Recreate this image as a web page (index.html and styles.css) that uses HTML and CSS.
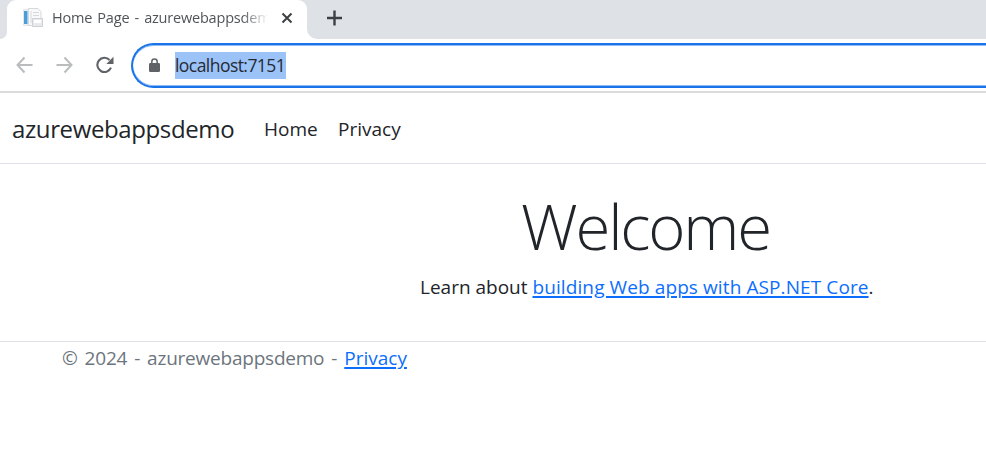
FILE: index.html
```html
<!DOCTYPE html>
<html lang="en">
<head>
<meta charset="utf-8">
<title>Home Page - azurewebappsdemo</title>
<link rel="stylesheet" href="styles.css">
</head>
<body>
<div class="tabstrip">
  <div class="edge"></div>
  <div class="tab">
    <svg class="favicon" width="20" height="20" viewBox="0 0 20 20">
      <path d="M.5 1.500h5v16h-5z" fill="#eef1f3" stroke="#e4e7ea"/>
      <path d="M1 3h3.500v13H1z" fill="#4a9fd8"/>
      <path d="M5.500.5H15l3 3v14H5.500z" fill="#f8f9fa" stroke="#d5d9dc"/>
      <path d="M8 3v12M10 4.500h6M10 7.500h6" stroke="#d5dade" fill="none"/>
      <path d="M9.500 10.500h10v8h-10z" fill="#e8ebed" stroke="#cdd1d5"/>
      <path d="M11 12h7v3h-7z" fill="#fff"/>
    </svg>
    <span class="tab-title">Home Page - azurewebappsdemo</span>
    <svg class="close" width="12" height="12" viewBox="0 0 12 12"><path d="M1.500 1.500l9 9M10.500 1.500l-9 9" stroke="#3c4043" stroke-width="2"/></svg>
  </div>
  <div class="rest"><svg width="16" height="16" viewBox="0 0 16 16"><path d="M7.500 .5v15M0 8h15" stroke="#3c4043" stroke-width="2.400"/></svg></div>
</div>
<div class="toolbar">
  <svg class="nav-icon" width="18" height="18" viewBox="0 0 18 18"><path d="M16.500 9H2M8.500 1.500L1.500 9l7 7.500" fill="none" stroke="#babcbe" stroke-width="2"/></svg>
  <svg class="nav-icon" width="18" height="18" viewBox="0 0 18 18"><path d="M.5 9h15M8.500 1.500L15.500 9l-7 7.500" fill="none" stroke="#babcbe" stroke-width="2"/></svg>
  <svg class="nav-icon" width="18" height="18" viewBox="0 0 18 18"><path d="M15 11.700A7.100 7.100 0 1 1 13.600 4" fill="none" stroke="#5f6368" stroke-width="2.100"/><path d="M17.500.8v7.200h-7.200z" fill="#5f6368"/></svg>
  <div class="omnibox">
    <svg class="lock" width="12" height="14" viewBox="0 0 12 14"><path d="M2.800 6V3.700a2.700 2.700 0 0 1 5.400 0V6" fill="none" stroke="#5f6368" stroke-width="1.500"/><rect x="0" y="5" width="11" height="9" rx="1.200" fill="#5f6368"/></svg>
    <span class="url">localhost:7151</span>
  </div>
</div>
<header class="navbar">
  <a class="brand">azurewebappsdemo</a>
  <a class="link home">Home</a>
  <a class="link">Privacy</a>
</header>
<main>
  <h1>Welcome</h1>
  <p>Learn about <a>building Web apps with ASP.NET Core</a>.</p>
</main>
<footer>© 2024 - azurewebappsdemo - <a>Privacy</a></footer>
</body>
</html>
```
FILE: styles.css
```css
* { box-sizing: border-box; }
body { margin: 0; height: 470px; overflow: hidden; background: #fff; color: #212529; font-family: "Segoe UI", "Open Sans", "Noto Sans", sans-serif; font-size: 19px; }
svg { display: block; flex: none; }
.tabstrip { display: flex; height: 39px; background: linear-gradient(#dee1e6 0 20px, #fff 20px); }
.edge { width: 7px; background: #dee1e6; border-bottom-right-radius: 8px; }
.tab { display: flex; align-items: center; width: 300px; padding: 0 14px 3px 16px; background: #fff; border-radius: 9px 9px 0 0; }
.tab-title { width: 216px; margin: -2px 0 0 9px; overflow: hidden; white-space: nowrap; font-size: 14.500px; letter-spacing: -.2px; word-spacing: 1.600px; color: #505458; -webkit-mask-image: linear-gradient(90deg, #000 190px, transparent 216px); mask-image: linear-gradient(90deg, #000 190px, transparent 216px); }
.close { margin-left: 13px; }
.rest { flex: 1; padding: 10px 0 0 20px; background: #dee1e6; border-bottom-left-radius: 10px; }
.toolbar { display: flex; align-items: center; height: 54px; padding-left: 16px; border-bottom: 2px solid #dadcdc; }
.nav-icon { margin-right: 22px; }
.omnibox { display: flex; align-items: center; flex: 1; height: 45px; margin-left: -5px; border: 2px solid #1a73e8; border-right: 0; border-radius: 23px 0 0 23px; box-shadow: inset 0 1px #8fbaf4, inset 0 -1px #8fbaf4; padding-left: 16px; }
.lock { margin-right: 14px; }
.url { width: 111px; height: 27px; line-height: 27px; white-space: nowrap; background: #9cc3f7; color: #252a35; font-size: 17.500px; letter-spacing: -.55px; }
.navbar { display: flex; align-items: center; height: 71px; padding: 0 0 0 12px; border-bottom: 1px solid #dee2e6; }
.brand { width: 252px; font-size: 24px; letter-spacing: -.38px; }
.link { padding-top: 1px; }
.home { width: 74px; }
h1 { margin: 26px 0 0; padding-left: 521px; height: 72px; line-height: 72px; font-weight: 300; font-size: 63.500px; letter-spacing: -2.200px; white-space: nowrap; }
p { margin: 10px 0 0 420px; height: 30px; line-height: 30px; white-space: nowrap; }
p a { letter-spacing: .1px; }
p a, footer a { color: #0d6efd; text-decoration: underline; text-decoration-thickness: 2px; text-underline-offset: 2px; }
footer { margin-top: 39px; padding-left: 62px; border-top: 1px solid #dee2e6; line-height: 32px; letter-spacing: -.22px; word-spacing: 2.300px; color: #6c757d; white-space: nowrap; }
footer a { letter-spacing: 0; }
```
